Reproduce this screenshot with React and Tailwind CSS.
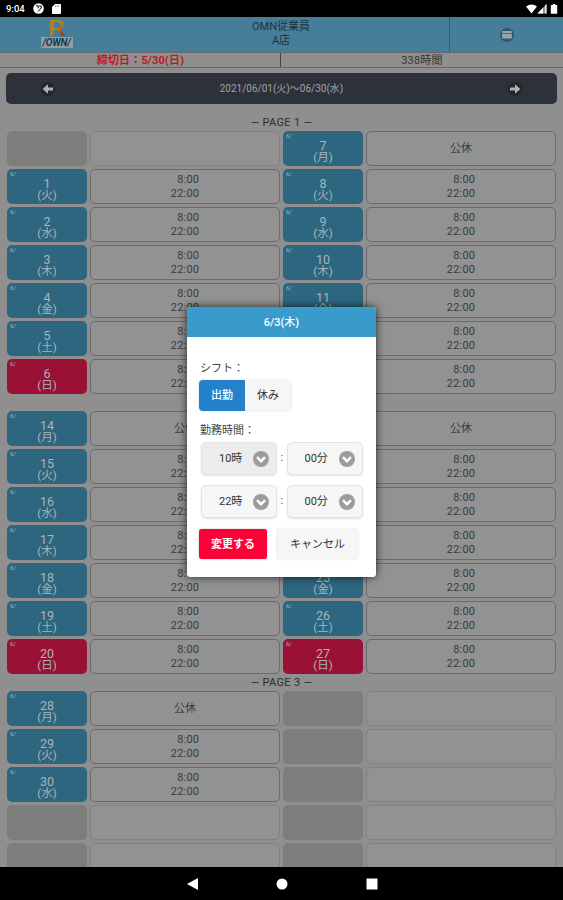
import React, { useState } from 'react';

const W = ['月', '火', '水', '木', '金', '土', '日'];

// 1ページ分のシフト (左列7日 + 右列7日)
const makeDays = (start) =>
  W.map((w, i) => {
    const day = start + i;
    if (day < 1 || day > 30) return { day: null };
    return { day, w, off: i === 0 };
  });

const pages = [
  { no: 1, left: makeDays(0), right: makeDays(7) },
  { no: 2, left: makeDays(14), right: makeDays(21) },
  { no: 3, left: makeDays(28), right: makeDays(35) },
];

const DayLabel = ({ item }) => {
  if (!item.day) return <div className="h-[35px] rounded-[5px] bg-[#7d7d7d]" />;
  return (
    <div className={`relative h-[35px] rounded-[5px] pt-[9px] text-center text-[#a9b4b9] ${item.w === '日' ? 'bg-[#9a1135]' : 'bg-[#2e667f]'}`}>
      <span className="absolute left-[3px] top-[2px] text-[6px] leading-[6px]">6/</span>
      <p className="text-[12.5px] leading-[12px]">{item.day}</p>
      <p className="text-[11.5px] leading-[11px]">({item.w})</p>
    </div>
  );
};

const ShiftCell = ({ item }) => {
  if (!item.day) return <div className="h-[35px] rounded-[5px] border border-[#828282] bg-[#929292]" />;
  return (
    <div className="flex h-[35px] items-center justify-center rounded-[5px] border border-[#6b6b6b] bg-[#929292] pt-px text-[11px] text-[#3a3a3a]">
      {item.off ? (
        <span>公休</span>
      ) : (
        <div className="text-right leading-[14.5px] tracking-[0.2px]">
          <p>8:00</p>
          <p>22:00</p>
        </div>
      )}
    </div>
  );
};

const Page = ({ page }) => (
  <section>
    <p className="h-[17px] text-center text-[11px] leading-[17px] tracking-[0.3px] text-[#2e2e2e]">— PAGE {page.no} —</p>
    <div className="grid grid-cols-[80px_190px_80px_190px] gap-x-[3px] gap-y-[3px] pl-[7px]">
      {page.left.map((item, i) => (
        <React.Fragment key={i}>
          <DayLabel item={item} />
          <ShiftCell item={item} />
          <DayLabel item={page.right[i]} />
          <ShiftCell item={page.right[i]} />
        </React.Fragment>
      ))}
    </div>
  </section>
);

const SelectBox = ({ label, active }) => (
  <button className={`flex h-[33px] w-[76px] items-center justify-between rounded-[5px] border border-[#e4e4e4] pl-[17px] pr-[7px] text-[11px] text-[#333] shadow-[0_1px_2px_rgba(0,0,0,0.12)] ${active ? 'bg-[#ececec]' : 'bg-[#f6f6f6]'}`}>
    <span className="whitespace-nowrap pt-[2px]">{label}</span>
    <svg className="h-4 w-4 shrink-0" viewBox="0 0 16 16">
      <circle cx="8" cy="8" r="8" fill="#9c9c9c" />
      <path d="M4 6.2 8 10.2 12 6.2" fill="none" stroke="#fff" strokeWidth="2.4" />
    </svg>
  </button>
);

const ShiftDialog = () => {
  const [working, setWorking] = useState(true);

  return (
    <div className="absolute left-[187px] top-[307px] h-[270px] w-[189px] overflow-hidden rounded-[3px] bg-white text-[11px] text-[#444] shadow-[0_0_8px_rgba(0,0,0,0.75)]">
      <div className="h-[30px] bg-[#389bcc] pt-px text-center leading-[30px] font-medium text-white">6/3(木)</div>
      <div className="pl-3 pt-[23px]">
        <p className="pl-px leading-[18px]">シフト：</p>
        <div className="mt-[2px] flex h-[31px] w-[92px] overflow-hidden rounded-[4px] shadow-[0_0_2px_rgba(0,0,0,0.18)]">
          <button onClick={() => setWorking(true)} className={`w-[46px] pt-[2px] ${working ? 'bg-[#2482cd] font-medium text-white' : 'bg-[#f6f6f6] text-[#333]'}`}>出勤</button>
          <button onClick={() => setWorking(false)} className={`w-[46px] pt-[2px] ${working ? 'bg-[#f6f6f6] text-[#333]' : 'bg-[#2482cd] font-medium text-white'}`}>休み</button>
        </div>
        <p className="mt-[11px] pl-px leading-[18px]">勤務時間：</p>
        <div className="mt-[2px] flex items-center pl-[2px]">
          <SelectBox label="10時" active />
          <span className="w-[9.5px] text-center">:</span>
          <SelectBox label="00分" />
        </div>
        <div className="mt-[10px] flex items-center pl-[2px]">
          <SelectBox label="22時" />
          <span className="w-[9.5px] text-center">:</span>
          <SelectBox label="00分" />
        </div>
        <div className="mt-[11px] flex gap-[10px]">
          <button className="h-[30px] w-[68px] rounded-[3px] bg-[#fd0038] pt-[3px] font-bold text-white shadow-[0_0_2px_rgba(0,0,0,0.3)]">変更する</button>
          <button className="h-[30px] w-[81px] rounded-[3px] bg-[#f6f6f6] pt-[3px] text-[#333] shadow-[0_0_2px_rgba(0,0,0,0.18)]">キャンセル</button>
        </div>
      </div>
    </div>
  );
};

const StatusBar = () => (
  <div className="flex h-[17px] shrink-0 items-center bg-black pl-[6px] pr-[5px] text-white">
    <span className="w-[27px] text-[9.5px] font-medium leading-[17px]">9:04</span>
    <svg className="h-[11px] w-[11px]" viewBox="0 0 11 11">
      <circle cx="5.5" cy="5.5" r="5.3" fill="#fff" />
      <path d="M3 2.800h2.200v2.600M6.200 3h2v2L5 8.600" fill="none" stroke="#000" strokeWidth="1" />
    </svg>
    <svg className="ml-[8px] h-[10px] w-[9px]" viewBox="0 0 9 10">
      <path d="M3 0h5.2q.8 0 .8.8v8.4q0 .8-.8.8H.8Q0 10 0 9.200V3z" fill="#fff" />
      <path d="M3.500 1.500v1.500M5.200 1.500v1.500M6.900 1.500v1.500" stroke="#555" strokeWidth=".7" />
    </svg>
    <svg className="ml-auto h-[10px] w-[32px]" viewBox="0 0 32 10">
      <path d="M0 2.600Q5.500-1.400 11 2.600L5.500 9.500z" fill="#fff" />
      <path d="M20.500 0v9.500H11.500z" fill="#999" />
      <path d="M17 3.800v5.700h-5.500z" fill="#fff" />
      <path d="M20.500 0v9.500h-1.200V1.300z" fill="#fff" />
      <path d="M26.700.9V0h2.600v.9h1.300q.6 0 .6.6v7.700q0 .6-.6.6h-5.200q-.6 0-.6-.6V1.500q0-.6.6-.6z" fill="#fff" />
    </svg>
  </div>
);

const ArrowIcon = ({ right }) => (
  <svg className={`h-4 w-4 ${right ? '' : 'rotate-180'}`} viewBox="0 0 16 16">
    <circle cx="8" cy="8" r="7" fill="#22262b" />
    <path d="M3 6.600h5V3.200L13.400 8 8 12.800V9.400H3z" fill="#b0b0b0" />
  </svg>
);

const App = () => {
  return (
    <div className="relative flex h-[900px] w-[563px] flex-col overflow-hidden bg-[#8f8f8f] font-['Roboto','Noto_Sans_CJK_JP',sans-serif]">
      <StatusBar />

      {/* ヘッダー */}
      <header className="flex h-[35px] shrink-0 bg-[#467d99] text-[#1e333e]">
        <div className="flex w-[113px] flex-col items-center pt-[2px]">
          <span className="h-[18px] scale-x-125 bg-linear-to-br from-[#b8801c] from-50% to-[#a83e18] to-80% bg-clip-text text-[22px] leading-[20px] font-medium text-transparent">R</span>
          <span className="h-[11px] w-[32px] bg-[#929da3] text-center text-[10px] leading-[11px] font-bold tracking-tight text-[#173750] italic">/OWN/</span>
        </div>
        <div className="w-[336px] pt-[3px] text-center text-[11px] leading-[14px]">
          <p>OMN従業員</p>
          <p>A店</p>
        </div>
        <div className="flex flex-1 items-center justify-center border-l border-[#2c5a72]">
          <svg className="h-[14px] w-[14px]" viewBox="0 0 14 14">
            <circle cx="7" cy="7" r="7" fill="#34586b" />
            <path d="M2.200 3h9.600v2.300H2.200zM2.200 6h9.600v4.500H2.200z" fill="#98a5ac" />
          </svg>
        </div>
      </header>

      <div className="flex h-[16px] shrink-0 border-y border-[#686868] text-center text-[11px] leading-[15px]">
        <p className="w-[281px] border-r border-[#444] pl-px font-bold tracking-[0.15px] text-[#c01822]">締切日：5/30(日)</p>
        <p className="flex-1 tracking-[0.2px] text-[#353535]">338時間</p>
      </div>

      <nav className="mx-[6px] mt-[5px] flex h-[31px] shrink-0 items-center justify-between rounded-[5px] bg-[#2d323a] pl-[34px] pr-[34px] text-[10px] text-[#a0a3a6]">
        <ArrowIcon />
        <span>2021/06/01(火)〜06/30(水)</span>
        <ArrowIcon right />
      </nav>

      <main className="mt-[10px] min-h-0 flex-1 overflow-hidden">
        {pages.map((page) => (
          <Page key={page.no} page={page} />
        ))}
      </main>

      <footer className="flex h-[33px] shrink-0 items-center justify-center bg-black">
        <svg className="h-[14px] w-[194px]" viewBox="0 0 194 14">
          <path d="M13 1v12L2 7z" fill="#fff" />
          <circle cx="97" cy="7" r="5.500" fill="#fff" />
          <path d="M181.500 1.500h11v11h-11z" fill="#fff" />
        </svg>
      </footer>

      <ShiftDialog />
    </div>
  );
};

export default App;
